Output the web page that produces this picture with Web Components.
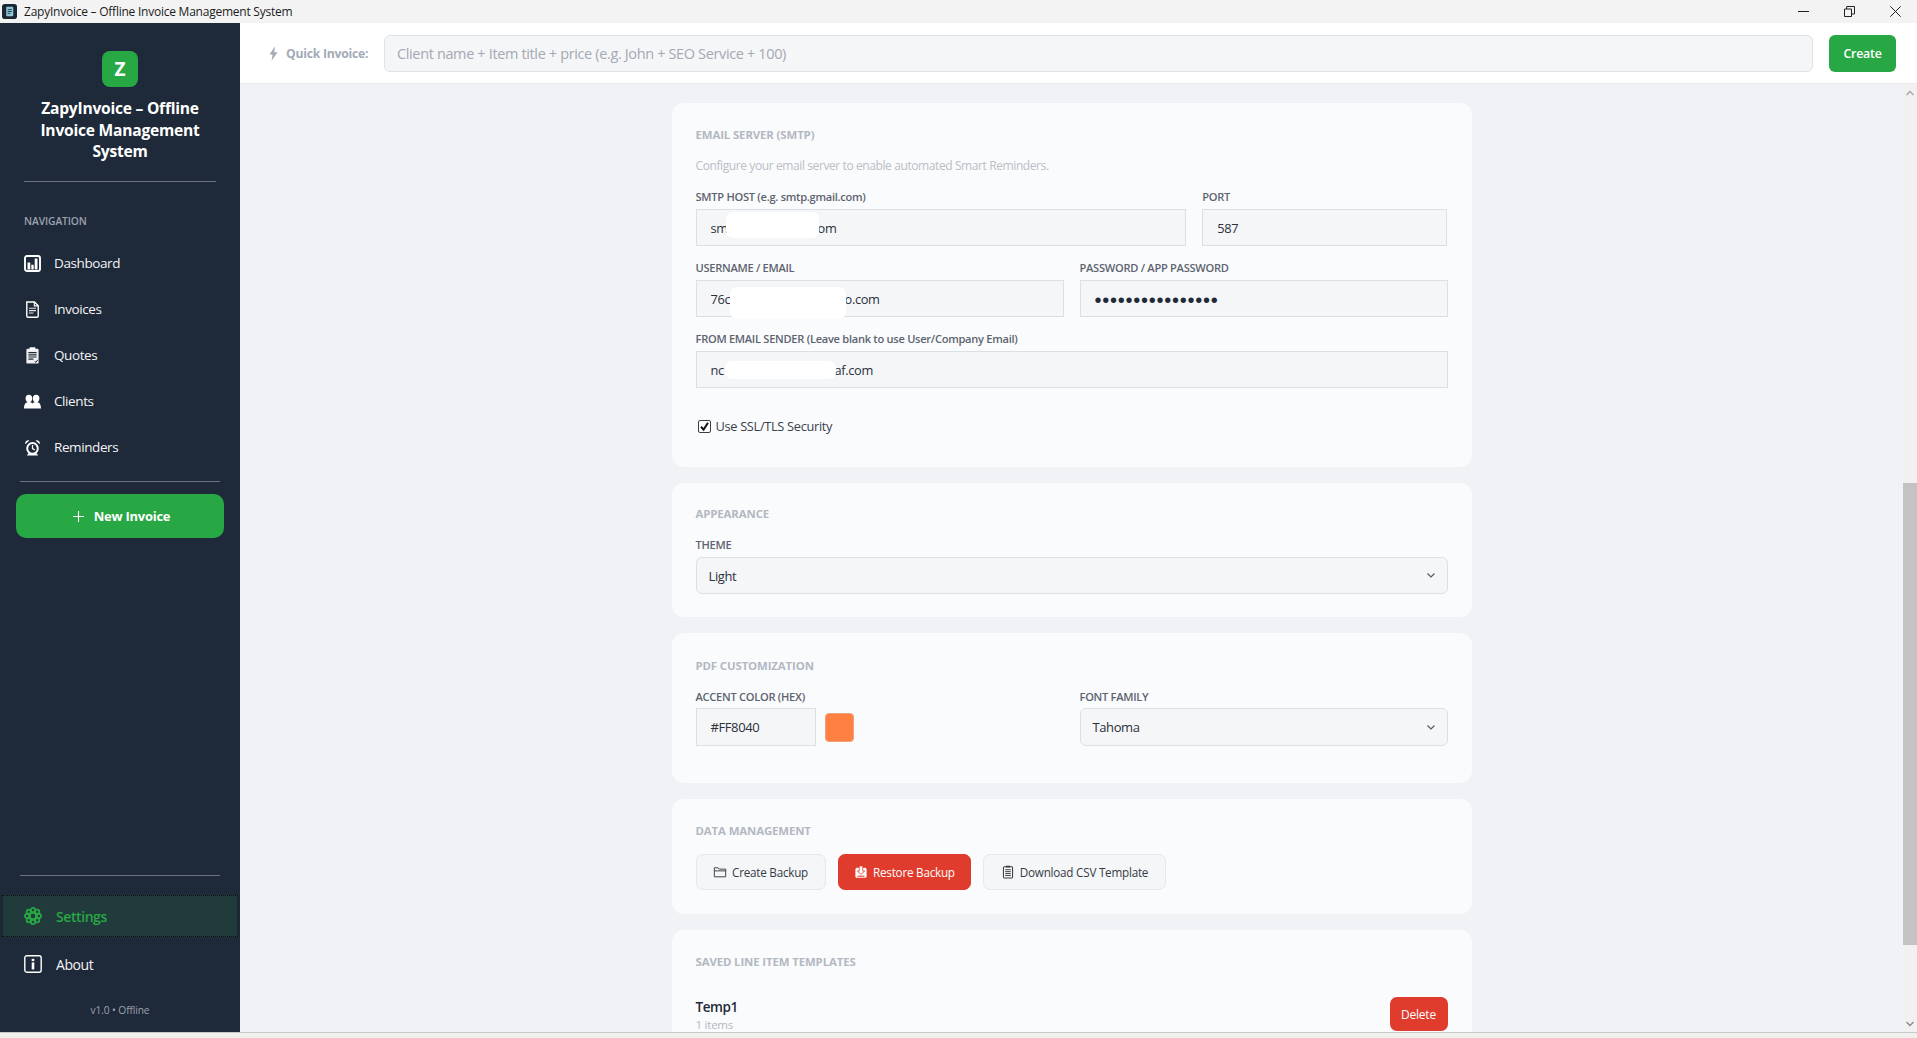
<!DOCTYPE html>
<html lang="en"><head><meta charset="utf-8"><title>ZapyInvoice</title>
<style>
html,body{margin:0;height:100%;overflow:hidden}
body{display:flex;flex-direction:column;font-family:"Open Sans","Noto Sans",sans-serif;letter-spacing:-.025em;background:#f0f0f0}
</style></head><body>
<x-titlebar>ZapyInvoice – Offline Invoice Management System</x-titlebar>
<x-shell>
  <x-sidebar slot="side" brand="ZapyInvoice – Offline Invoice Management System">
    <x-nav icon="dashboard">Dashboard</x-nav>
    <x-nav icon="invoice">Invoices</x-nav>
    <x-nav icon="quote">Quotes</x-nav>
    <x-nav icon="clients">Clients</x-nav>
    <x-nav icon="alarm">Reminders</x-nav>
    <x-nav slot="foot" icon="gear" active>Settings</x-nav>
    <x-nav slot="foot" icon="info" lower>About</x-nav>
  </x-sidebar>
  <x-topbar slot="top"></x-topbar>
  <x-scrollarea slot="main">
    <x-card heading="Email Server (SMTP)" pb="33">
      <p slot="intro">Configure your email server to enable automated Smart Reminders.</p>
      <x-row cols="2fr 1fr">
        <x-field label="SMTP HOST (e.g. smtp.gmail.com)"><x-input pre="sm" pre-w="15" blob-w="93" blob-h="26" blob-y="-3" post-x="-1" post="om"></x-input></x-field>
        <x-field label="PORT"><x-input post="587"></x-input></x-field>
      </x-row>
      <x-row cols="1fr 1fr">
        <x-field label="USERNAME / EMAIL"><x-input pre="76c" pre-w="19" blob-w="116" blob-h="32" blob-y="4" post-x="-1" post="o.com"></x-input></x-field>
        <x-field label="PASSWORD / APP PASSWORD"><x-input dots="••••••••••••••••"></x-input></x-field>
      </x-row>
      <x-row cols="1fr">
        <x-field label="FROM EMAIL SENDER (Leave blank to use User/Company Email)"><x-input pre="nc" pre-w="14" blob-w="111" blob-h="18" blob-y="0" post-x="-6" post="raf.com"></x-input></x-field>
      </x-row>
      <x-check>Use SSL/TLS Security</x-check>
    </x-card>
    <x-card heading="Appearance" pt="23" head-gap="16" pb="23">
      <x-field label="THEME"><x-select>Light</x-select></x-field>
    </x-card>
    <x-card heading="PDF Customization" pt="25" head-gap="16" pb="22">
      <x-row cols="1fr 1fr" tall>
        <x-field tight label="ACCENT COLOR (HEX)"><x-color value="#FF8040"></x-color></x-field>
        <x-field tight label="FONT FAMILY"><x-select tall>Tahoma</x-select></x-field>
      </x-row>
    </x-card>
    <x-card heading="Data Management" pb="24">
      <x-actions>
        <x-btn icon="folder">Create Backup</x-btn>
        <x-btn icon="restore" danger>Restore Backup</x-btn>
        <x-btn icon="clip">Download CSV Template</x-btn>
      </x-actions>
    </x-card>
    <x-card heading="Saved Line Item Templates" pb="24" head-gap="27">
      <x-template-row name="Temp1" count="1 items"></x-template-row>
    </x-card>
  </x-scrollarea>
</x-shell>
<x-statusstrip></x-statusstrip>
<script>
const ICONS={
dashboard:`<svg viewBox="0 0 17 17"><rect x="1" y="1" width="15" height="15" rx="2" fill="none" stroke="#fff" stroke-width="1.9"/><path d="M3.500 7.600h2.800v6.900H3.500zM7.300 9.800h2.400v4.700H7.300zM10.700 3.500h2.800v11h-2.800z" fill="#fff"/></svg>`,
invoice:`<svg viewBox="0 0 17 17"><path d="M2.800 1h7.700l3.700 3.700V15a1.200 1.200 0 0 1-1.200 1.200H4A1.200 1.200 0 0 1 2.800 15z" fill="none" stroke="#fff" stroke-width="1.400"/><path d="M10.300 1v3.900h3.900" fill="none" stroke="#fff" stroke-width="1.100"/><path d="M5 7.200h7M5 9.600h7M5 12h4.500" stroke="#fff" stroke-width="1.100" opacity=".9"/></svg>`,
quote:`<svg viewBox="0 0 17 17"><rect x="2.400" y="1.800" width="12.200" height="14.800" rx="1.200" fill="#eef0f3"/><rect x="5.600" y=".3" width="5.800" height="2.600" rx=".7" fill="#fff"/><path d="M4.400 5.600h8.200M4.400 7.800h8.200M4.400 10h8.200M4.400 12.200h5" stroke="#1f2937" stroke-width="1.200"/><path d="M10.600 14.400l1.200 1 2-2.600" fill="none" stroke="#1f2937" stroke-width="1"/></svg>`,
clients:`<svg viewBox="0 0 17 17"><g fill="#fff"><ellipse cx="4.900" cy="5.400" rx="3.300" ry="3.600"/><ellipse cx="12.100" cy="5.400" rx="3.300" ry="3.600"/><path d="M0 15.500c0-4.500 1.800-6.500 4.900-6.500 1.600 0 2.800.5 3.500 1.500.8-1 2-1.500 3.700-1.500 3.100 0 4.900 2 4.900 6.500z"/></g></svg>`,
alarm:`<svg viewBox="0 0 17 17"><circle cx="8.500" cy="9.400" r="5.300" fill="none" stroke="#fff" stroke-width="2"/><path d="M8.500 6v3.600l2.300 1.400" fill="none" stroke="#fff" stroke-width="1.200"/><path d="M1.200 5.200a3.200 3.200 0 0 1 4.300-3.800zM15.800 5.200a3.200 3.200 0 0 0-4.300-3.800zM4.200 14.200l-1.200 2.300h11l-1.200-2.300z" fill="#fff"/></svg>`,
gear:`<svg viewBox="0 0 19 19"><g fill="none" stroke="#28a745" stroke-width="1.900"><circle cx="9.500" cy="9.500" r="3.400"/><circle cx="9.500" cy="3.200" r="2.200"/><circle cx="9.500" cy="15.800" r="2.200"/><circle cx="3.200" cy="9.500" r="2.200"/><circle cx="15.800" cy="9.500" r="2.200"/><circle cx="5" cy="5" r="2.200"/><circle cx="14" cy="5" r="2.200"/><circle cx="5" cy="14" r="2.200"/><circle cx="14" cy="14" r="2.200"/></g></svg>`,
info:`<svg viewBox="0 0 18 18"><rect x=".8" y=".8" width="16.400" height="16.400" rx="2" fill="none" stroke="#fff" stroke-width="1.400"/><rect x="7.700" y="7.400" width="2.600" height="7" fill="#fff"/><rect x="7.700" y="3.800" width="2.600" height="2.300" fill="#fff"/></svg>`,
folder:`<svg viewBox="0 0 16 16"><path d="M1.500 13.500V3.200h4.400l1.200 1.500h7.400v8.800zM1.500 6.700h13.400" fill="none" stroke="#3a3f47" stroke-width="1.100"/></svg>`,
restore:`<svg viewBox="0 0 16 16"><rect x="1.600" y="3.200" width="12.800" height="11.400" rx="1.800" fill="#fff"/><path d="M6 1h4v6h2.200L8 10.800 3.800 7H6z" fill="#fff" stroke="#e03c2e" stroke-width=".9"/><path d="M4 12.800h8" stroke="#e03c2e" stroke-width="1.200"/></svg>`,
clip:`<svg viewBox="0 0 16 16"><rect x="2.800" y="2" width="10.400" height="12.800" rx="1" fill="none" stroke="#3a3f47" stroke-width="1.200"/><rect x="5.600" y=".8" width="4.800" height="2" fill="#3a3f47"/><path d="M4.800 5.400h6.400M4.800 7.600h6.400M4.800 9.800h6.400M4.800 12h6.400" stroke="#3a3f47" stroke-width="1.100"/></svg>`,
bolt:`<svg viewBox="0 0 8 13"><path d="M5.400 0L.4 7.300h2.800L2.300 13l5.300-7.700H4.600z" fill="#a3aab6"/></svg>`,
app:`<svg viewBox="0 0 16 16"><rect width="16" height="16" rx="3" fill="#1b2735"/><rect x="4.500" y="3" width="7.500" height="10" rx="1" fill="#8fc9d8"/><path d="M6 6h4.500M6 8h4.500M6 10h3" stroke="#1b2735" stroke-width=".9"/></svg>`
};
function def(name,html,init){
  customElements.define(name,class extends HTMLElement{
    constructor(){super();this.attachShadow({mode:"open"})}
    connectedCallback(){this.shadowRoot.innerHTML=typeof html==="function"?html(this):html;if(init)init(this)}
  });
}
const a=(el,n,d="")=>el.hasAttribute(n)?el.getAttribute(n):d;

def("x-titlebar",`<style>
:host{display:flex;align-items:center;height:23px;flex:none;background:#f3f3f3;color:#1c1c1c;font-size:12px;letter-spacing:-.02em;padding-left:2px}
.i{width:15px;height:15px;margin-right:7px;flex:none;display:block}
.t{flex:1;white-space:nowrap;padding-bottom:1px}
.c{display:flex;align-items:center;gap:35px;padding-right:16px}
svg.w{display:block;width:11px;height:11px}
</style><svg class="i" viewBox="0 0 16 16">${ICONS.app.replace(/^<svg[^>]*>|<\/svg>$/g,"")}</svg><span class="t"><slot></slot></span>
<span class="c"><svg class="w" viewBox="0 0 11 11"><path d="M0 5.500h11" stroke="#222" stroke-width="1"/></svg>
<svg class="w" viewBox="0 0 11 11"><path d="M.5 3h7v7.500h-7zM2.700 3V.5h7.800v7.500H7.500" fill="none" stroke="#222" stroke-width="1"/></svg>
<svg class="w" viewBox="0 0 11 11"><path d="M.3.300l10.400 10.400M10.700.300L.3 10.700" stroke="#222" stroke-width="1"/></svg></span>`);

def("x-shell",`<style>
:host{display:grid;grid-template-columns:240px 1fr;grid-template-rows:61px 1fr;flex:1;min-height:0}
::slotted([slot=side]){grid-row:1 / 3}
</style><slot name="side"></slot><slot name="top"></slot><slot name="main"></slot>`);

def("x-statusstrip",`<style>:host{display:block;flex:none;height:5px;background:#f0f0ee;border-top:1px solid #c9c9c9}</style>`);

def("x-sidebar",e=>`<style>
:host{display:flex;flex-direction:column;background:#1e2939;color:#fff;min-height:0}
.logo{width:36px;height:36px;border-radius:8px;background:#28a745;margin:28px auto 0;display:flex;align-items:center;justify-content:center;font-weight:700;font-size:19px;letter-spacing:0;color:#fff}
h1{margin:11px 24px 0;font-size:15.600px;line-height:21.500px;font-weight:700;text-align:center;letter-spacing:-.015em}
.hr{height:1px;background:#6b7280;flex:none}
.h1{margin:18.500px 24px 0}
.label{margin:31px 24px 11px;font-size:10.300px;line-height:16px;color:#9ca3af;font-weight:600;letter-spacing:-.01em}
.h2{margin:11px 20px 12px}
.new{display:flex;align-items:center;justify-content:center;gap:10px;height:44px;margin:0 16px;border-radius:10px;background:#28a745;font-size:13px;font-weight:700;letter-spacing:-.02em;padding-left:3px}
.new svg{width:11px;height:11px;display:block}
.foot{margin-top:auto;display:flex;flex-direction:column}
.h3{margin:0 20px 19px}
.ver{margin-top:17px;height:16px;line-height:16px;font-size:10.200px;text-align:center;color:#9ca3af;margin-bottom:14px;letter-spacing:-.01em}
</style>
<div class="logo">Z</div><h1>${a(e,"brand")}</h1><div class="hr h1"></div>
<div class="label">NAVIGATION</div><slot></slot>
<div class="hr h2"></div>
<div class="new"><svg viewBox="0 0 11 11"><path d="M5.500 0v11M0 5.500h11" stroke="#fff" stroke-width="1.100"/></svg><span>New Invoice</span></div>
<div class="foot"><div class="hr h3"></div><slot name="foot"></slot><div class="ver">v1.0 • Offline</div></div>`);

def("x-nav",e=>{
 const act=e.hasAttribute("active"),low=e.hasAttribute("lower"),foot=act||low;
 return `<style>
:host{display:flex;align-items:center;height:${foot?42:46}px;font-size:${foot?14:13.500}px;color:${act?"#28a745":"#f3f4f6"};letter-spacing:-.03em;
 ${foot?"margin:0 2px;padding-left:22px;":"padding-left:24px;"}${act?"background:#213a3b;outline:1px dotted #0a1215;outline-offset:-1px;margin-bottom:6px;font-weight:600;":""}}
.i{width:${foot?18:17}px;height:${foot?18:17}px;margin-right:${foot?14:13}px;flex:none}
.i svg{display:block;width:100%;height:100%}
</style><span class="i">${ICONS[a(e,"icon")]}</span><slot></slot>`});

def("x-topbar",`<style>
:host{display:flex;align-items:center;background:#fff;border-bottom:1px solid #e9ebef;box-sizing:border-box;height:61px;padding:0 21px 0 29px;font-size:13px}
.b{width:9px;height:15px;flex:none;margin-right:8px}.b svg{display:block;width:100%;height:100%}
.l{font-weight:700;color:#a3aab6;margin-right:16px;white-space:nowrap;font-size:12.200px;letter-spacing:-.02em;width:82px}
.q{flex:1;height:37px;box-sizing:border-box;border:1px solid #dfe2e8;border-radius:6px;background:#f5f6f8;color:#a3a9b3;display:flex;align-items:center;padding-left:12px;font-size:14.500px;letter-spacing:-.025em;white-space:nowrap}
.c{width:67px;height:37px;margin-left:16px;background:#28a745;color:#fff;border-radius:6px;display:flex;align-items:center;justify-content:center;font-weight:600;font-size:12.400px;letter-spacing:-.02em}
</style><span class="b">${ICONS.bolt}</span><span class="l">Quick Invoice:</span>
<div class="q">Client name + Item title + price (e.g. John + SEO Service + 100)</div><div class="c">Create</div>`);

def("x-scrollarea",`<style>
:host{display:flex;background:#f0f2f5;min-height:0;overflow:hidden}
.content{flex:1;overflow:hidden;display:flex;flex-direction:column;align-items:center;gap:16px;padding-top:19px;min-width:0}
.bar{width:14px;flex:none;background:#f1f1f1;display:flex;flex-direction:column}
.ar{height:17px;flex:none;display:flex;align-items:center;justify-content:center}
.ar svg{width:8px;height:6px}
.s1{height:382px;flex:none}.th{height:462px;flex:none;background:#c3c3c3}.s2{flex:1}
</style><div class="content"><slot></slot></div>
<div class="bar"><div class="ar"><svg viewBox="0 0 8 6"><path d="M.5 5L4 1.500 7.500 5" fill="none" stroke="#a5a5a5" stroke-width="1.400"/></svg></div><div class="s1"></div><div class="th"></div><div class="s2"></div><div class="ar"><svg viewBox="0 0 8 6"><path d="M.5 1L4 4.500 7.500 1" fill="none" stroke="#8a8a8a" stroke-width="1.400"/></svg></div></div>`);

def("x-card",e=>`<style>
:host{display:block;width:800px;flex:none;box-sizing:border-box;background:#fafbfc;border-radius:12px;padding:${a(e,"pt","24")}px 24px ${a(e,"pb","24")}px}
h2{margin:0 0 ${a(e,"head-gap","15")}px;font-size:11.400px;line-height:16px;font-weight:700;color:#b2b8c2;text-transform:uppercase;letter-spacing:-.01em}
::slotted(p){margin:0 0 16px;font-size:12px;line-height:16px;color:#b9bec7}
</style><h2>${a(e,"heading")}</h2><slot name="intro"></slot><slot></slot>`);

def("x-row",e=>`<style>:host{display:grid;grid-template-columns:${a(e,"cols")};gap:16px;margin-bottom:15px}</style><slot></slot>`);

def("x-field",e=>`<style>:host{display:block;min-width:0}
.l{display:block;height:14px;line-height:14px;margin-bottom:${e.hasAttribute("tight")?4:5}px;font-size:11.100px;font-weight:600;color:#5d6470;letter-spacing:-.025em;white-space:nowrap}
</style><span class="l">${a(e,"label")}</span><slot></slot>`);

def("x-input",e=>{
 const dots=a(e,"dots");
 return `<style>
:host{display:flex;align-items:center;height:37px;box-sizing:border-box;border:1px solid #dcdfe4;background:#f5f6f8;padding-left:14px;font-size:12.800px;color:#2b313b;white-space:nowrap;letter-spacing:-.025em}
.pre{display:inline-block;width:${a(e,"pre-w","0")}px;flex:none}
.blob{width:${a(e,"blob-w","0")}px;height:${a(e,"blob-h","0")}px;flex:none;background:#fff;border-radius:7px;position:relative;z-index:1;top:${a(e,"blob-y","0")}px}
.post{margin-left:${a(e,"post-x","0")}px}
.dots{font-family:"Liberation Sans",sans-serif;font-size:20px;letter-spacing:.750px;color:#1f2937;line-height:1;padding-top:2px}
</style>${dots?`<span class="dots">${dots}</span>`:`<span class="pre">${a(e,"pre")}</span><span class="blob"></span><span class="post">${a(e,"post")}</span>`}`});

def("x-select",e=>`<style>
:host{display:flex;align-items:center;justify-content:space-between;height:${e.hasAttribute("tall")?38:37}px;box-sizing:border-box;border:1px solid #dcdfe4;border-radius:6px;background:#f5f6f8;padding:0 12px 0 12px;font-size:13px;color:#2b313b}
svg{width:8px;height:5px;display:block}
</style><span><slot></slot></span><svg viewBox="0 0 8 5"><path d="M.5.500L4 4l3.500-3.500" fill="none" stroke="#555" stroke-width="1.100"/></svg>`);

def("x-color",e=>`<style>
:host{display:flex;align-items:center;gap:9px}
.i{width:120px;height:38px;box-sizing:border-box;border:1px solid #dcdfe4;background:#f5f6f8;padding-left:14px;font-size:13px;color:#2b313b;display:flex;align-items:center}
.s{width:29px;height:29px;box-sizing:border-box;border:1px solid #eda27d;border-radius:4px;background:#ff8040}
</style><span class="i">${a(e,"value")}</span><span class="s"></span>`);

def("x-check",`<style>
:host{display:flex;align-items:center;height:16px;margin-top:30px;font-size:12.800px;color:#3b414c;letter-spacing:-.025em}
.b{width:13px;height:13px;box-sizing:border-box;border:1px solid #3f3f3f;border-radius:2px;background:#fff;margin:0 5px 0 2px;flex:none}
.b svg{display:block;width:11px;height:11px}
</style><span class="b"><svg viewBox="0 0 11 11"><path d="M2 5.800L4.600 8.600 9 1.800" fill="none" stroke="#111" stroke-width="2"/></svg></span><slot></slot>`);

def("x-actions",`<style>:host{display:flex;gap:12px}</style><slot></slot>`);

def("x-btn",e=>{const d=e.hasAttribute("danger");return `<style>
:host{display:flex;align-items:center;height:36px;box-sizing:border-box;padding:0 ${d?15.500:16.500}px;gap:5px;border-radius:7px;font-size:11.700px;letter-spacing:-.02em;white-space:nowrap;
 ${d?"background:#e03c2e;color:#fff;border:1px solid #e03c2e;":"background:#f5f6f8;color:#363c46;border:1px solid #e6e8ec;"}}
.i{width:14px;height:14px;flex:none}.i svg{display:block;width:100%;height:100%}
</style><span class="i">${ICONS[a(e,"icon")]}</span><slot></slot>`});

def("x-template-row",e=>`<style>
:host{display:flex;justify-content:space-between;align-items:flex-start}
.n{font-size:13.500px;line-height:17px;margin-top:2px;font-weight:600;color:#1f2937;letter-spacing:-.03em}
.c{font-size:11.500px;line-height:15px;color:#b3b8c2;margin-top:1px;letter-spacing:-.02em}
.d{width:58px;height:34px;border-radius:7px;background:#e03c2e;color:#fff;font-size:12px;display:flex;align-items:center;justify-content:center;letter-spacing:-.02em}
</style><div><div class="n">${a(e,"name")}</div><div class="c">${a(e,"count")}</div></div><div class="d">Delete</div>`);
</script>
</body></html>
